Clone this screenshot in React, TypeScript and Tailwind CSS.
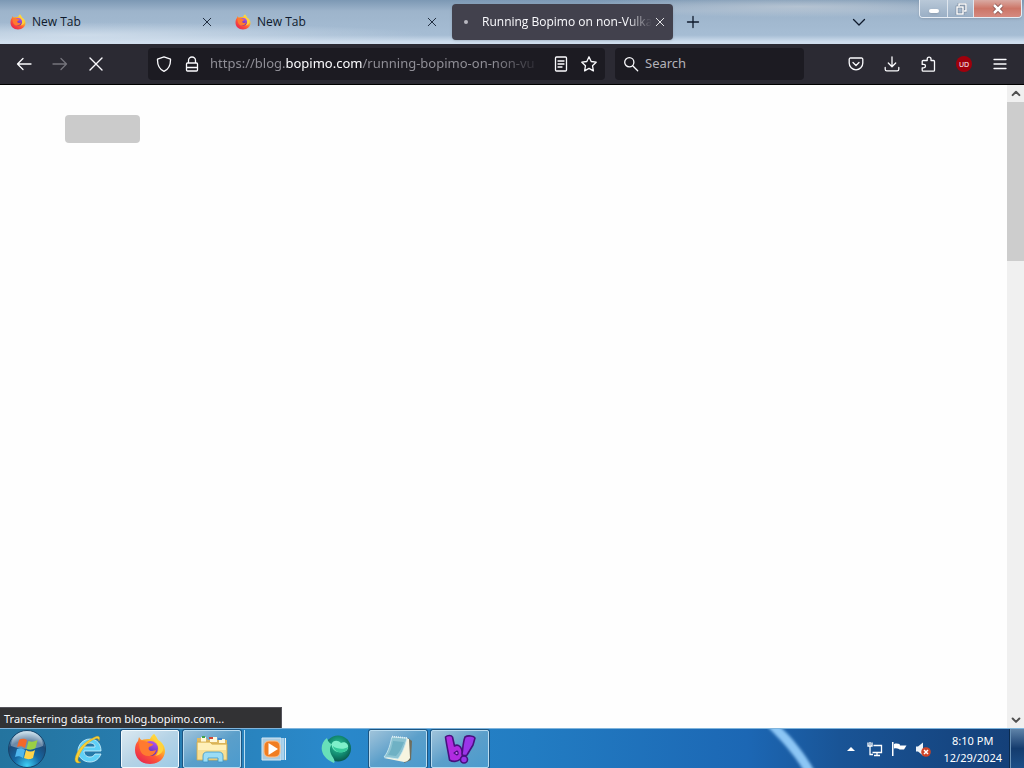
import React from 'react';

type IconProps = { className?: string };

const Stroke: React.FC<{ className?: string; width?: number; children: React.ReactNode }> = ({
  className = 'size-4',
  width = 1.3,
  children,
}) => (
  <svg
    viewBox="0 0 16 16"
    className={className}
    fill="none"
    stroke="currentColor"
    strokeWidth={width}
    strokeLinecap="round"
    strokeLinejoin="round"
    aria-hidden="true"
  >
    {children}
  </svg>
);

const CloseIcon: React.FC<IconProps> = ({ className }) => (
  <Stroke className={className} width={1.4}>
    <path d="M2 2l12 12M14 2L2 14" />
  </Stroke>
);

const FirefoxIcon: React.FC<IconProps> = ({ className }) => (
  <svg viewBox="0 0 32 32" className={className} aria-hidden="true">
    <defs>
      <linearGradient id="fox-body" x1="0.85" y1="0.1" x2="0.2" y2="0.95">
        <stop offset="0" stopColor="#fff44f" />
        <stop offset="0.3" stopColor="#ffb52b" />
        <stop offset="0.6" stopColor="#ff5a36" />
        <stop offset="1" stopColor="#e8274f" />
      </linearGradient>
      <linearGradient id="fox-globe" x1="0.7" y1="0" x2="0.3" y2="1">
        <stop offset="0" stopColor="#b455f0" />
        <stop offset="1" stopColor="#4a2aa8" />
      </linearGradient>
    </defs>
    <path
      d="M20 1c2 2 3 4 4 6 4 2 7 6 7 11 0 7-6 13-15 13S1 25 1 17c0-4 1-7 3-9l1-4c1 2 2 3 3 3 2-1 5-1 8-1 1-2 2-4 4-5z"
      fill="url(#fox-body)"
    />
    <circle cx="16.500" cy="15.500" r="7.500" fill="url(#fox-globe)" />
    <path
      d="M5 9c3-2 7-1 10 1l4 1c0 2-3 2-4 3-1 2 0 4 3 4 2 0 3-1 4-1-1 4-4 6-8 6-6 0-9-5-9-14z"
      fill="#ff7a30"
    />
    <path d="M19 3c0 4 4 5 5 10 1 4 0 8-3 10 5-1 9-4 8-9-1-3-3-4-4-5-1-2-3-5-5-8z" fill="#ffd23c" />
  </svg>
);

const StartOrb: React.FC = () => (
  <svg viewBox="0 0 40 40" className="size-10" aria-hidden="true">
    <defs>
      <radialGradient id="orb" cx="0.5" cy="0.95" r="0.9">
        <stop offset="0" stopColor="#3fd0f5" />
        <stop offset="0.4" stopColor="#1668a4" />
        <stop offset="0.75" stopColor="#1c4a78" />
        <stop offset="1" stopColor="#a9c8dc" />
      </radialGradient>
    </defs>
    <circle cx="20" cy="20" r="18.5" fill="url(#orb)" stroke="#17446b" />
    <path d="M4 17a16 15 0 0 1 32 0c-9 4-22 4-32 0z" fill="#fff" opacity="0.35" />
    <path d="M12 11c3-2 6-1 8 0l-2 8c-3-2-5-2-8-1z" fill="#f2672a" />
    <path d="M21.500 12c3 1 5 1 9-1l-2 8c-3 2-6 2-9 1z" fill="#9bd045" />
    <path d="M10 20c3-1 5-1 8 1l-2 8c-3-2-5-2-8-1z" fill="#4fb6ee" />
    <path d="M19 21c3 2 6 2 9 0l-2 8c-4 2-6 1-9 0z" fill="#ffd34a" />
  </svg>
);

const ExplorerE: React.FC = () => (
  <svg viewBox="0 0 32 32" className="size-8" aria-hidden="true">
    <path
      d="M29 18H12c0 4 3 6 6 6 2 0 4-1 5-3h6c-2 5-6 8-11 8-7 0-12-5-12-11S11 6 18 6c7 0 11 5 11 12zm-6-4c0-3-2-4-5-4s-5 1-6 4z"
      fill="#5fd0f7"
      stroke="#d4f5ff"
      strokeWidth="0.8"
    />
    <path d="M27 8c2-5-1-6-6-3C12 9 4 18 3 26c0 4 3 5 6 3-3 0-4-2-2-6C10 15 17 8 23 6c3-1 4 0 4 2z" fill="#f7cf35" stroke="#cf9d16" strokeWidth="0.4" />
  </svg>
);

const FolderIcon: React.FC = () => (
  <svg viewBox="0 0 34 32" className="h-8 w-9" aria-hidden="true">
    <path d="M2 9V5h9l2 2h19v5H2z" fill="#dfba62" />
    <path d="M6 4h5v5H6zM15 4h7v5h-7zM24 6h6v4h-6z" fill="#fff8da" />
    <path d="M7 3h3v2H7z" fill="#3fa34c" />
    <path d="M14 4h4v2h-4z" fill="#cf4435" />
    <path d="M23 5h4v2h-4z" fill="#4083c9" />
    <path d="M2 9h13l2 2h15v16H2z" fill="#f7df94" stroke="#d2a94a" strokeWidth="0.8" />
    <path d="M3 10h12l2 2h14v5H3z" fill="#fff0b9" />
    <path d="M8 29v-6c0-3 2-4 4-4h12c2 0 4 1 4 4v6h-5v-4H13v4z" fill="#9adcf5" stroke="#3b94c6" strokeWidth="0.8" />
  </svg>
);

const MediaPlayerIcon: React.FC = () => (
  <svg viewBox="0 0 28 28" className="size-7" aria-hidden="true">
    <path d="M7 3h18v22H7z" fill="#6fb0dc" />
    <path d="M23 3v22M25.500 3v22" stroke="#e9f5fc" />
    <path d="M2 3h19v22H2z" fill="#aacbe0" stroke="#d5e8f4" />
    <rect x="4" y="6" width="16" height="16" rx="5" fill="#f07d22" stroke="#ffc08a" />
    <path d="M8.500 8l9.500 6-9.500 6z" fill="#fff" />
  </svg>
);

const GlobeIcon: React.FC = () => (
  <svg viewBox="0 0 32 32" className="size-8" aria-hidden="true">
    <defs>
      <radialGradient id="teal-ball" cx="0.5" cy="0.4" r="0.6">
        <stop offset="0" stopColor="#2fc99b" />
        <stop offset="0.6" stopColor="#128a70" />
        <stop offset="1" stopColor="#07594c" />
      </radialGradient>
    </defs>
    <circle cx="18" cy="15.500" r="13" fill="url(#teal-ball)" />
    <path d="M7 5C-1 11-1 24 14 30c2-3-2-6-3-9-2-5-1-8 2-10-3 0-5-2-6-6z" fill="#68dfb9" />
    <path d="M12 10c2-3 6-3 9 0 4-2 8 1 7 5-1 4-6 5-10 4-4-1-7-4-6-9z" fill="#7ff0ca" />
    <path d="M13 13c3 3 11 4 15 1-1 5-6 6-10 5-2-1-5-3-5-6z" fill="#35c99a" />
  </svg>
);

const NotepadIcon: React.FC = () => (
  <svg viewBox="0 0 32 32" className="size-8" aria-hidden="true">
    <path d="M26 5l4 3-1 19-7 3z" fill="#6e6d5c" />
    <path d="M23 5l4 1 1 19c-2 3-4 4-6 4L2 25l6-1z" fill="#f7f4e0" />
    <path d="M10 4l15 1c-2 8-4 14-9 21L2 24C7 18 8 11 10 4z" fill="#8cc3d2" stroke="#d3eef4" strokeWidth="0.8" />
    <path d="M11 8l11 1c-2 5-4 10-8 14L6 22c3-4 4-9 5-14z" fill="#6fb1c4" />
    <path d="M10 3.500l15 1.500" stroke="#dfeff3" strokeWidth="1.600" strokeDasharray="1 1" />
  </svg>
);

// two leaning letter shapes, "b" and "!"
const BopimoIcon: React.FC = () => (
  <svg viewBox="0 0 32 32" className="size-8" aria-hidden="true">
    <g stroke="#48107e" strokeWidth="1.600" strokeLinejoin="round">
      <path
        d="M1.500 4c2-2 6-2 7 0l2 9c3-2 6 0 7 3 2 5 1 8-1 10-3 3-8 3-11 1-1-7-3-15-4-23z"
        fill="#b12be0"
      />
      <path d="M21 4c3-2 9-1 10 1l-2 7-6 10c-1 1-5 1-5-1 1-6 1-12 3-17z" fill="#9a35e8" />
      <circle cx="20" cy="26.500" r="3.500" fill="#9a35e8" />
      <path d="M10 20l3-2c1 1 2 3 0 4z" fill="#d878f5" strokeWidth="1.200" />
    </g>
  </svg>
);

const Tab: React.FC<{ title: string; active?: boolean }> = ({ title, active }) => (
  <div
    className={
      active
        ? 'mx-0.5 flex h-9 w-[221px] items-center rounded bg-[#42414d] px-2 text-[#fbfbfe] shadow-sm'
        : 'mx-0.5 flex h-9 w-[221px] items-center px-2 text-[#0f1a2c]'
    }
  >
    <span className="flex size-4 shrink-0 items-center justify-center">
      {active ? <span className="mr-1 size-1 rounded-full bg-[#b9b8c0]" /> : <FirefoxIcon className="size-4" />}
    </span>
    <span className={active ? 'ml-1.5 flex-1 mask-r-from-85% whitespace-nowrap' : 'ml-1.5 flex-1 whitespace-nowrap'}>
      {title}
    </span>
    <button type="button" aria-label="Close tab" className="flex size-4 shrink-0 items-center justify-center">
      <CloseIcon className="size-2.5" />
    </button>
  </div>
);

const TitleBar: React.FC = () => (
  <header className="flex h-11 shrink-0 items-center bg-[radial-gradient(ellipse_at_8%_80%,rgba(215,227,239,0.8),transparent_26%),radial-gradient(ellipse_at_78%_15%,rgba(205,212,220,0.6),transparent_20%),linear-gradient(to_bottom,#7c98b4_0%,#9db4cb_25%,#a6bdd4_80%,#cfdeee_95%)] font-['Open_Sans','Noto_Sans',sans-serif] text-xs">
    <Tab title="New Tab" />
    <Tab title="New Tab" />
    <div className="flex min-w-0 flex-1 items-center">
      <Tab title="Running Bopimo on non-Vulka" active />
      <button type="button" aria-label="New tab" className="flex size-9 items-center justify-center text-[#0f1a2c]">
        <Stroke>
          <path d="M8 2.500v11M2.500 8h11" />
        </Stroke>
      </button>
      <button type="button" aria-label="List all tabs" className="mr-11 ml-auto flex h-9 w-8 items-center justify-center text-[#0f1a2c]">
        <Stroke>
          <path d="M2.500 5.500L8 11l5.500-5.500" />
        </Stroke>
      </button>
    </div>
    <div className="mr-0.5 flex h-[18px] shrink-0 self-start overflow-hidden rounded-b border border-t-0 border-[#e6edf5] shadow-sm">
      <button type="button" aria-label="Minimize" className="flex w-7 items-center justify-center border-r border-[#dfe6ee] bg-linear-to-b from-[#b9c8d8] to-[#9aafc5]">
        <span className="mt-1 h-1 w-2.5 rounded-xs bg-white shadow-sm" />
      </button>
      <button type="button" aria-label="Restore" className="flex w-[26px] items-center justify-center border-r border-[#dfe6ee] bg-linear-to-b from-[#b9c8d8] to-[#9aafc5]">
        <svg viewBox="0 0 12 12" className="size-3" fill="none" aria-hidden="true">
          <path d="M4 3V1h7v7H9M2 4h6v7H2z" stroke="#66768a" strokeWidth="2.500" />
          <path d="M4 3V1h7v7H9M2 4h6v7H2z" stroke="#fff" strokeWidth="1.500" />
        </svg>
      </button>
      <button type="button" aria-label="Close" className="flex w-[47px] items-center justify-center bg-linear-to-b from-[#d9aaa3] via-[#cc7567] to-[#d58a80]">
        <svg viewBox="0 0 12 12" className="size-3" aria-hidden="true">
          <path d="M2 2l8 8M10 2l-8 8" stroke="#7c4a48" strokeWidth="4" />
          <path d="M2 2l8 8M10 2l-8 8" stroke="#fff" strokeWidth="2.500" />
        </svg>
      </button>
    </div>
  </header>
);

const ToolButton: React.FC<{ label: string; dim?: boolean; children: React.ReactNode }> = ({ label, dim, children }) => (
  <button
    type="button"
    aria-label={label}
    className={
      dim ? 'flex h-8 w-9 items-center justify-center text-[#75747c]' : 'flex h-8 w-9 items-center justify-center text-[#fbfbfe]'
    }
  >
    {children}
  </button>
);

const NavBar: React.FC = () => (
  <nav className="flex h-[41px] shrink-0 items-center border-b border-black bg-[#2b2a33] px-1.5 text-[13px]">
    <ToolButton label="Back">
      <Stroke>
        <path d="M15 8H1.500M7 2.500L1.500 8 7 13.500" />
      </Stroke>
    </ToolButton>
    <ToolButton label="Forward" dim>
      <Stroke>
        <path d="M1 8h13.500M9 2.500L14.500 8 9 13.500" />
      </Stroke>
    </ToolButton>
    <ToolButton label="Stop">
      <CloseIcon />
    </ToolButton>
    <div className="ml-[34px] flex h-8 min-w-0 flex-1 items-center rounded bg-[#1c1b22] text-[#fbfbfe]">
      <button type="button" aria-label="Tracking protection" className="ml-2 shrink-0">
        <Stroke>
          <path d="M8 .8l6.500 2.400c.2 6-2 10-6.500 12.200C3.500 13.200 1.300 9.200 1.500 3.200z" />
        </Stroke>
      </button>
      <button type="button" aria-label="Site information" className="ml-3 shrink-0">
        <Stroke>
          <path d="M3.500 7h9a1 1 0 0 1 1 1v6a1 1 0 0 1-1 1h-9a1 1 0 0 1-1-1V8a1 1 0 0 1 1-1zM4.500 7V4.500a3.500 3.500 0 0 1 7 0V7M3 11.500h10" />
        </Stroke>
      </button>
      <div className="ml-2.5 flex-1 mask-r-from-85% whitespace-nowrap text-[#8f8e96]">
        https://blog.<span className="text-[#fbfbfe]">bopimo.com</span>/running-bopimo-on-non-vu
      </div>
      <button type="button" aria-label="Reader view" className="ml-2.5 shrink-0">
        <Stroke>
          <path d="M3.500 1h9a1 1 0 0 1 1 1v12a1 1 0 0 1-1 1h-9a1 1 0 0 1-1-1V2a1 1 0 0 1 1-1zM5 5h6M5 8h6M5 11h4" />
        </Stroke>
      </button>
      <button type="button" aria-label="Bookmark this page" className="mr-2 ml-3 shrink-0">
        <Stroke>
          <path d="M8 .8l2.200 4.700 5 .7-3.700 3.500.9 5.200L8 12.400l-4.400 2.500.9-5.200L.8 6.200l5-.7z" />
        </Stroke>
      </button>
    </div>
    <label className="ml-2.5 flex h-8 w-[189px] shrink-0 items-center rounded bg-[#1c1b22] pl-2 text-[#fbfbfe]">
      <Stroke className="size-4 shrink-0">
        <circle cx="6.300" cy="6.300" r="4.600" />
        <path d="M9.700 9.700l5 5" />
      </Stroke>
      <input
        type="text"
        aria-label="Search"
        placeholder="Search"
        className="ml-1.5 w-full min-w-0 bg-transparent outline-none placeholder:text-[#b3b2b9]"
      />
    </label>
    <div className="ml-[34px] flex shrink-0">
      <ToolButton label="Save to Pocket">
        <Stroke>
          <path d="M2.500 2h11a1.300 1.300 0 0 1 1.300 1.300V7a6.800 6.800 0 0 1-13.600 0V3.300A1.300 1.300 0 0 1 2.500 2zM5 6.500l3 3 3-3" />
        </Stroke>
      </ToolButton>
      <ToolButton label="Downloads">
        <Stroke>
          <path d="M8 .8v9.700M4.300 7L8 10.700 11.700 7M1.200 11.500v1.700c0 1 .6 1.600 1.600 1.600h10.400c1 0 1.600-.6 1.600-1.600v-1.700" />
        </Stroke>
      </ToolButton>
      <ToolButton label="Extensions">
        <Stroke>
          <path d="M5 4.500h2.200V3a1.900 1.900 0 0 1 3.800 0v1.500h2.500a1 1 0 0 1 1 1v8.700a1 1 0 0 1-1 1H3.200a1 1 0 0 1-1-1v-2.400h1.600a1.700 1.700 0 0 0 0-3.400H2.200V5.500a1 1 0 0 1 1-1z" />
        </Stroke>
      </ToolButton>
      <ToolButton label="uBlock Origin">
        <span className="flex size-4 items-center justify-center rounded-full bg-[#a0000c] text-[7px] leading-none">
          UD
        </span>
      </ToolButton>
      <ToolButton label="Menu">
        <Stroke>
          <path d="M2 3.500h12M2 8h12M2 12.500h12" />
        </Stroke>
      </ToolButton>
    </div>
  </nav>
);

const ScrollBar: React.FC = () => (
  <div className="flex w-[17px] shrink-0 flex-col bg-[#f0f0f0] text-[#505050]">
    <button type="button" aria-label="Scroll up" className="flex h-[17px] items-center justify-center">
      <Stroke className="size-3" width={2.600}>
        <path d="M3.500 9.500L8 5l4.500 4.500" />
      </Stroke>
    </button>
    <div className="h-[159px] bg-[#cdcdcd]" />
    <button type="button" aria-label="Scroll down" className="mt-auto flex h-[17px] items-center justify-center">
      <Stroke className="size-3" width={2.600}>
        <path d="M3.500 6L8 10.500 12.500 6" />
      </Stroke>
    </button>
  </div>
);

const TaskButton: React.FC<{ label: string; state?: 'idle' | 'open' | 'active'; children: React.ReactNode }> = ({
  label,
  state = 'idle',
  children,
}) => {
  const styles = {
    idle: 'border-transparent',
    open: 'border-[#b9dcf0] bg-linear-to-br from-[#9fc3da] via-[#5b9fca] to-[#4b9bce] shadow-[0_0_0_1px_#1c5480]',
    active: 'border-[#f0f9fd] bg-linear-to-br from-[#dbe9f1] via-[#b5d3e6] to-[#9dcbe6] shadow-[0_0_0_1px_#1c5480]',
  };
  return (
    <button
      type="button"
      aria-label={label}
      className={`mr-1 flex h-[38px] w-[58px] shrink-0 items-center justify-center rounded-xs border ${styles[state]}`}
    >
      {children}
    </button>
  );
};

const TaskBar: React.FC = () => (
  <footer className="flex h-10 shrink-0 items-center border-t border-[#7fb4dc] bg-[linear-gradient(to_right,#24749f_0%,#287fb4_18%,#2a89cb_32%,#227cc2_52%,#1c67b4_73%,#195496_82%,#143e76_100%)] shadow-[0_-1px_0_#0b3558]">
    <button type="button" aria-label="Start" className="mr-3 ml-[7px] shrink-0">
      <StartOrb />
    </button>
    <div className="flex shrink-0">
      <TaskButton label="Internet Explorer">
        <ExplorerE />
      </TaskButton>
      <TaskButton label="Firefox" state="active">
        <FirefoxIcon className="size-8" />
      </TaskButton>
      <div className="flex">
        <TaskButton label="Windows Explorer" state="open">
          <FolderIcon />
        </TaskButton>
        <span className="-ml-1 h-[38px] w-1 border-r border-[#b9dcf0]" />
      </div>
      <TaskButton label="Media Player">
        <MediaPlayerIcon />
      </TaskButton>
      <TaskButton label="Browser">
        <GlobeIcon />
      </TaskButton>
      <TaskButton label="Notepad" state="open">
        <NotepadIcon />
      </TaskButton>
      <TaskButton label="Bopimo" state="open">
        <BopimoIcon />
      </TaskButton>
    </div>
    <svg viewBox="0 0 60 40" className="ml-auto h-full w-[60px] shrink-0" aria-hidden="true">
      <defs>
        <filter id="streak-soft">
          <feGaussianBlur stdDeviation="1.500" />
        </filter>
      </defs>
      <path d="M-1-3h13c13 12 26 28 36 46H37C27 26 14 12-1-3z" fill="#8cc6f5" filter="url(#streak-soft)" />
    </svg>
    <div className="ml-4 flex shrink-0 items-center text-white">
      <button type="button" aria-label="Show hidden icons" className="flex w-4 justify-center">
        <svg viewBox="0 0 8 4" className="h-1 w-2" fill="currentColor" aria-hidden="true">
          <path d="M4 0l4 4H0z" />
        </svg>
      </button>
      <svg viewBox="0 0 16 16" className="ml-2 size-4" fill="none" stroke="currentColor" strokeWidth="1.300" aria-label="Network">
        <path d="M6.500 4.500h8v7H5.500M10 12v2M7 14.500h6M1 1.500v3.500h4V1.500M3 1v3M3 5v8.500h3" />
      </svg>
      <svg viewBox="0 0 16 16" className="ml-2 size-4" fill="currentColor" aria-label="Action Center">
        <path d="M1 1h1.500v14H1zM3 3c2-.8 4-.5 5.500 0L9 4.500h6.500L13 8.500H8.500L8 8c-2-.8-3-.8-5-.5z" />
      </svg>
      <svg viewBox="0 0 16 16" className="ml-2 size-4" aria-label="Muted">
        <path d="M1 5.500h2L8 1.500v13L3 10.500H1z" fill="#eef3f8" />
        <circle cx="11" cy="11" r="4.800" fill="#cf4327" />
        <path d="M9 9l4 4M13 9l-4 4" stroke="#fff" strokeWidth="1.500" />
      </svg>
    </div>
    <div className="ml-3 flex shrink-0 flex-col text-center text-[11px] leading-[17px] text-white">
      <span>8:10 PM</span>
      <span>12/29/2024</span>
    </div>
    <button
      type="button"
      aria-label="Show desktop"
      className="ml-2 h-full w-3.5 shrink-0 border-l border-[#6a93b8] bg-linear-to-b from-[#5f83a8] via-[#143c6e] to-[#1c4f88] shadow-[-1px_0_0_#0b2a4d]"
    />
  </footer>
);

const App: React.FC = () => (
  <div className="flex h-screen flex-col overflow-hidden bg-white font-['Noto_Sans','Open_Sans',sans-serif]">
    <TitleBar />
    <NavBar />
    <div className="relative flex min-h-0 flex-1">
      <main className="flex-1 bg-[#fefefe] px-[65px] py-[30px]">
        <div className="h-7 w-[75px] rounded bg-[#cbcbcb]" />
      </main>
      <ScrollBar />
      <div
        role="status"
        className="absolute bottom-0 left-0 h-[21px] w-[282px] border-t border-r border-[#55545c] bg-[#323234] pl-1 text-[11px] leading-[21px] text-[#fbfbfe]"
      >
        Transferring data from blog.bopimo.com...
      </div>
    </div>
    <TaskBar />
  </div>
);

export default App;
